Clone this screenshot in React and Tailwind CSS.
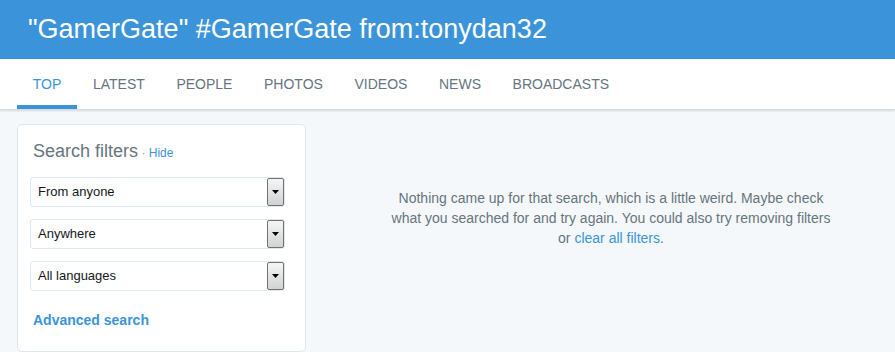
// ---------------------------- Search results page (empty state) ----------------------------
const tabs = ["Top", "Latest", "People", "Photos", "Videos", "News", "Broadcasts"];
const filters = ["From anyone", "Anywhere", "All languages"];

// Old-style dropdown with a grey arrow button on the right
const FilterSelect = ({ label }) => (
    <div className="relative h-[30px] w-[255px] rounded-[3px] border border-[#e1e8ed] bg-white">
        <div className="flex h-full items-center pl-[7px] text-[13px] text-[#14171a]">{label}</div>
        <div className="absolute right-0 top-0 flex h-[28px] w-[17px] items-center justify-center rounded-[2px] border border-[#707070] bg-gradient-to-b from-[#f6f6f6] to-[#d2d2d2]">
            <svg width="7" height="4" viewBox="0 0 7 4">
                <path d="M0 0h7L3.5 4z" fill="#000" />
            </svg>
        </div>
    </div>
);

const App = () => {
    return (
        <div className="min-h-screen bg-[#f5f8fa] font-['Liberation_Sans',Arial,sans-serif]">
            {/* Header with query */}
            <div className="flex h-[59px] items-center bg-[#3b94d9] pl-[28px]">
                <h1 className="text-[27px] leading-none text-white">"GamerGate" #GamerGate from:tonydan32</h1>
            </div>

            {/* Tabs */}
            <div className="flex h-[51px] border-b border-[#d5dbdf] bg-white pl-[17px] shadow-[0_1px_2px_rgba(0,0,0,0.12)]">
                {tabs.map((tab, i) => (
                    <div
                        key={tab}
                        className={
                            i === 0
                                ? "flex h-full items-center border-b-4 border-[#3b94d9] px-[15.8px] pt-[4px] text-[14px] uppercase text-[#3b94d9]"
                                : "flex h-full items-center px-[15.8px] text-[14px] uppercase text-[#66757f]"
                        }
                    >
                        {tab}
                    </div>
                ))}
            </div>

            {/* Body */}
            <div className="flex pl-[17px] pt-[14px]">
                {/* Filters card */}
                <div className="w-[289px] rounded-[5px] border border-[#e1e8ed] bg-white pb-[22px] pl-[12px] pt-[15px]">
                    <div className="pl-[3px] leading-[22px]">
                        <span className="text-[18px] text-[#66757f]">Search filters</span>
                        <span className="text-[12px] text-[#8899a6]"> · </span>
                        <span className="text-[12px] text-[#3b94d9]">Hide</span>
                    </div>
                    <div className="mt-[13px] flex flex-col gap-[12px]">
                        {filters.map((f) => (
                            <FilterSelect key={f} label={f} />
                        ))}
                    </div>
                    <div className="mt-[20px] pl-[3px] text-[14px] font-bold leading-[18px] text-[#3b94d9]">Advanced search</div>
                </div>

                {/* Empty results message */}
                <div className="flex-1 pl-[21px] pt-[64px]">
                    <p className="mx-auto w-[450px] text-center text-[14px] leading-[20px] text-[#66757f]">
                        Nothing came up for that search, which is a little weird. Maybe check what you searched for and try again. You could also try removing filters or{" "}
                        <span className="text-[#3b94d9]">clear all filters</span>.
                    </p>
                </div>
            </div>
        </div>
    );
};

export default App;
